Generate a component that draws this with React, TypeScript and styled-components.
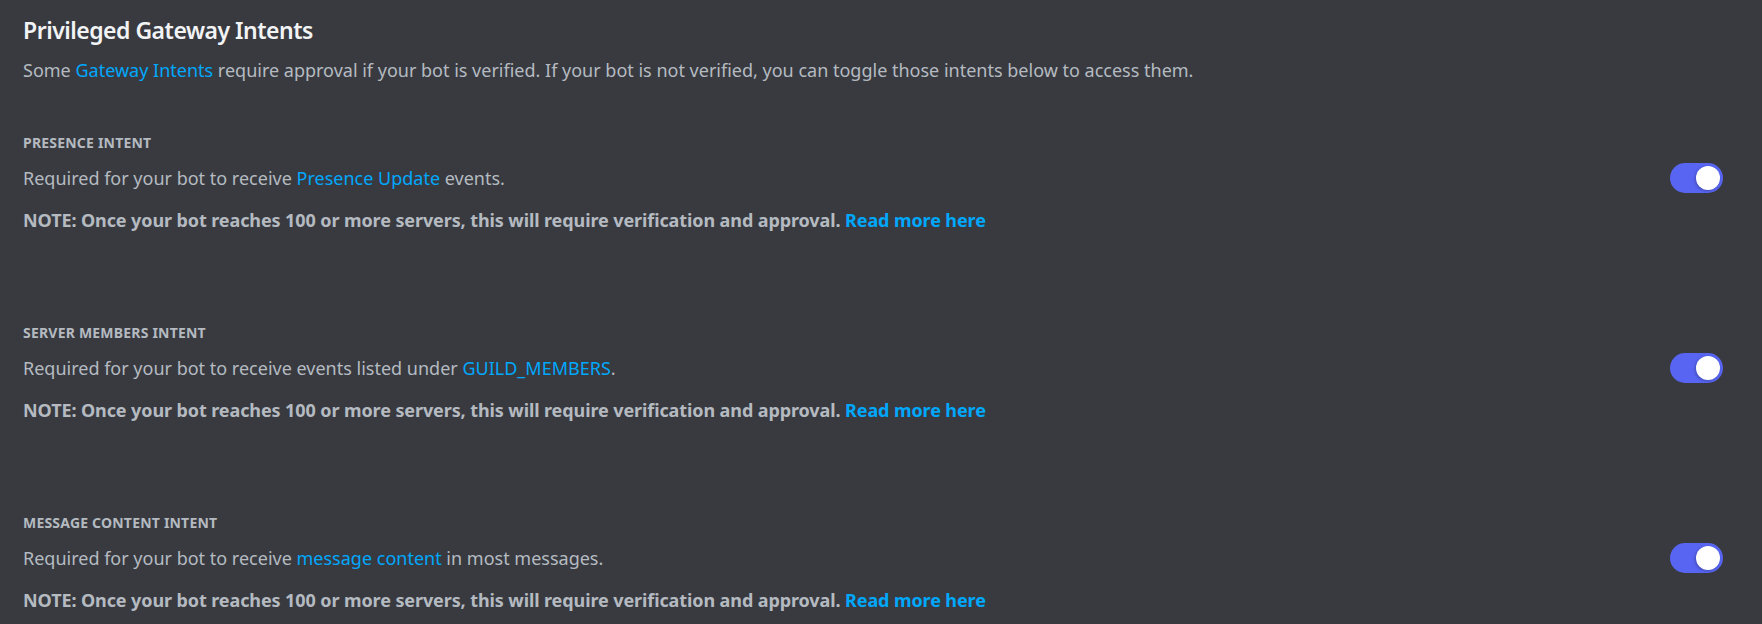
import { useState } from 'react';
import styled, { createGlobalStyle } from 'styled-components';

const GlobalStyle = createGlobalStyle`
  html, body {
    margin: 0;
    padding: 0;
    background: #383a40;
  }
  body {
    font-family: "Noto Sans", "Open Sans", sans-serif;
    -webkit-font-smoothing: antialiased;
  }
`;

const Page = styled.div`
  min-height: 624px;
  box-sizing: border-box;
  padding: 15px 39px 0 23px;
  background: #383a40;
`;

const Title = styled.h1`
  margin: 0;
  font-size: 23px;
  line-height: 30px;
  font-weight: 600;
  letter-spacing: -0.5px;
  color: #f2f3f5;
`;

const Subtitle = styled.p`
  margin: 13px 0 0;
  font-size: 18px;
  line-height: 24px;
  color: #b5bac1;
`;

const Link = styled.a`
  color: #00a8fc;
  text-decoration: none;
  cursor: pointer;
`;

const Section = styled.section`
  margin-top: 52px;

  & + & {
    margin-top: 92px;
  }
`;

const Label = styled.h3`
  margin: 0;
  font-size: 14px;
  line-height: 18px;
  font-weight: 700;
  letter-spacing: 0.2px;
  text-transform: uppercase;
  color: #b5bac1;
`;

const Row = styled.div`
  display: flex;
  align-items: center;
  justify-content: space-between;
  margin-top: 14px;
  height: 24px;
`;

const Description = styled.p`
  margin: 0;
  font-size: 18px;
  line-height: 24px;
  color: #b5bac1;
`;

const Note = styled.p`
  margin: 18px 0 0;
  font-size: 18px;
  line-height: 24px;
  font-weight: 700;
  letter-spacing: -0.1px;
  color: #b5bac1;
`;

const Switch = styled.button<{ $on: boolean }>`
  position: relative;
  flex-shrink: 0;
  width: 53px;
  height: 30px;
  padding: 0;
  border: none;
  border-radius: 15px;
  background: ${(p) => (p.$on ? '#5865f2' : '#80848e')};
  cursor: pointer;
`;

const Knob = styled.span<{ $on: boolean }>`
  position: absolute;
  top: 3px;
  left: ${(p) => (p.$on ? '26px' : '3px')};
  width: 24px;
  height: 24px;
  border-radius: 50%;
  background: #ffffff;
  box-shadow: -1px 1px 3px rgba(0, 0, 0, 0.25);
  transition: left 0.15s ease;
`;

const Toggle = () => {
  const [on, setOn] = useState(true);
  return (
    <Switch $on={on} onClick={() => setOn(!on)} aria-pressed={on}>
      <Knob $on={on} />
    </Switch>
  );
};

const NoteText = () => (
  <Note>
    NOTE: Once your bot reaches 100 or more servers, this will require verification and approval.{' '}
    <Link>Read more here</Link>
  </Note>
);

const intents = [
  {
    label: 'Presence Intent',
    before: 'Required for your bot to receive ',
    link: 'Presence Update',
    after: ' events.',
  },
  {
    label: 'Server Members Intent',
    before: 'Required for your bot to receive events listed under ',
    link: 'GUILD_MEMBERS',
    after: '.',
  },
  {
    label: 'Message Content Intent',
    before: 'Required for your bot to receive ',
    link: 'message content',
    after: ' in most messages.',
  },
];

const App = () => {
  return (
    <>
      <GlobalStyle />
      <Page>
        <Title>Privileged Gateway Intents</Title>
        <Subtitle>
          Some <Link>Gateway Intents</Link> require approval if your bot is verified. If your bot is not
          verified, you can toggle those intents below to access them.
        </Subtitle>

        {intents.map((intent) => (
          <Section key={intent.label}>
            <Label>{intent.label}</Label>
            <Row>
              <Description>
                {intent.before}
                <Link>{intent.link}</Link>
                {intent.after}
              </Description>
              <Toggle />
            </Row>
            <NoteText />
          </Section>
        ))}
      </Page>
    </>
  );
};

export default App;
